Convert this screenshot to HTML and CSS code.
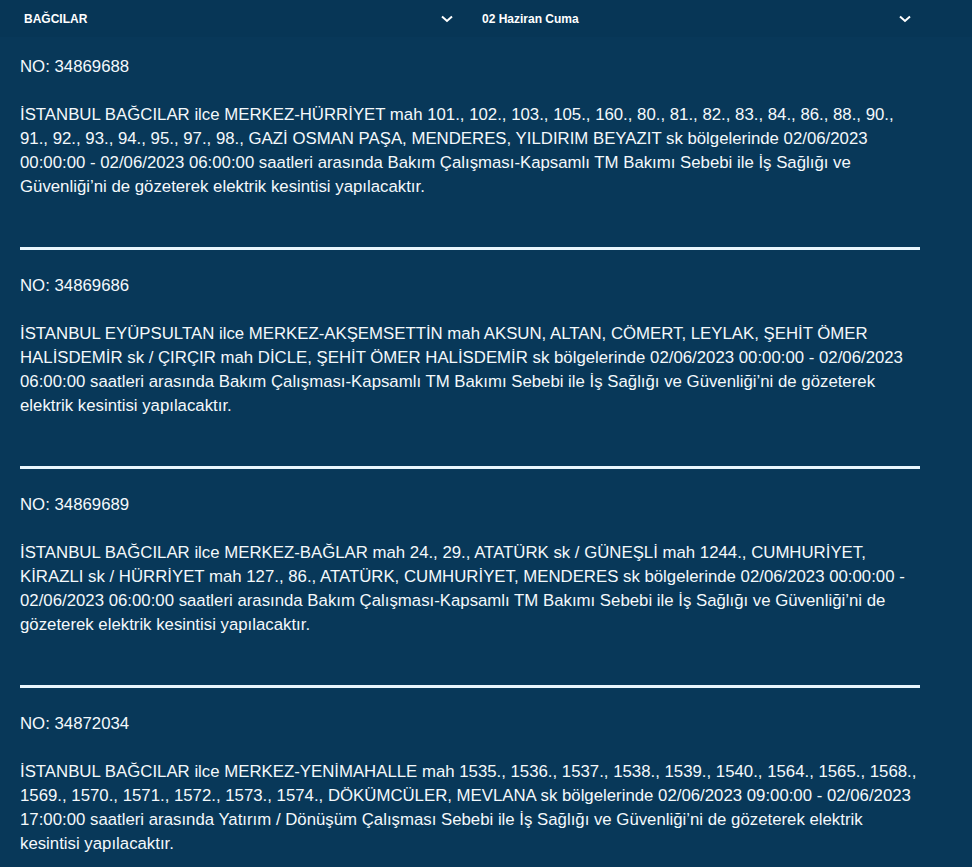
FILE: index.html
```html
<!DOCTYPE html>
<html lang="tr">
<head>
  <meta charset="UTF-8">
  <meta name="viewport" content="width=device-width, initial-scale=1.0">
  <title>Planlı Kesintiler</title>
  <link rel="stylesheet" href="styles.css">
</head>
<body>
  <!-- Filters -->
  <div class="filters">
    <div class="select">
      <span>BAĞCILAR</span>
      <svg class="chevron" width="12" height="8" viewBox="0 0 12 8"><polyline points="1,1.5 6,6 11,1.5" /></svg>
    </div>
    <div class="select">
      <span>02 Haziran Cuma</span>
      <svg class="chevron" width="12" height="8" viewBox="0 0 12 8"><polyline points="1,1.5 6,6 11,1.5" /></svg>
    </div>
  </div>

  <!-- Outage List -->
  <div class="outages">
    <div class="outage">
      <p class="no">NO: 34869688</p>
      <p class="desc">İSTANBUL BAĞCILAR ilce MERKEZ-HÜRRİYET mah 101., 102., 103., 105., 160., 80., 81., 82., 83., 84., 86., 88., 90., 91., 92., 93., 94., 95., 97., 98., GAZİ OSMAN PAŞA, MENDERES, YILDIRIM BEYAZIT sk bölgelerinde 02/06/2023 00:00:00 - 02/06/2023 06:00:00 saatleri arasında Bakım Çalışması-Kapsamlı TM Bakımı Sebebi ile İş Sağlığı ve Güvenliği’ni de gözeterek elektrik kesintisi yapılacaktır.</p>
    </div>
    <hr>
    <div class="outage">
      <p class="no">NO: 34869686</p>
      <p class="desc">İSTANBUL EYÜPSULTAN ilce MERKEZ-AKŞEMSETTİN mah AKSUN, ALTAN, CÖMERT, LEYLAK, ŞEHİT ÖMER HALİSDEMİR sk / ÇIRÇIR mah DİCLE, ŞEHİT ÖMER HALİSDEMİR sk bölgelerinde 02/06/2023 00:00:00 - 02/06/2023 06:00:00 saatleri arasında Bakım Çalışması-Kapsamlı TM Bakımı Sebebi ile İş Sağlığı ve Güvenliği’ni de gözeterek elektrik kesintisi yapılacaktır.</p>
    </div>
    <hr>
    <div class="outage">
      <p class="no">NO: 34869689</p>
      <p class="desc">İSTANBUL BAĞCILAR ilce MERKEZ-BAĞLAR mah 24., 29., ATATÜRK sk / GÜNEŞLİ mah 1244., CUMHURİYET, KİRAZLI sk / HÜRRİYET mah 127., 86., ATATÜRK, CUMHURİYET, MENDERES sk bölgelerinde 02/06/2023 00:00:00 - 02/06/2023 06:00:00 saatleri arasında Bakım Çalışması-Kapsamlı TM Bakımı Sebebi ile İş Sağlığı ve Güvenliği’ni de gözeterek elektrik kesintisi yapılacaktır.</p>
    </div>
    <hr>
    <div class="outage">
      <p class="no">NO: 34872034</p>
      <p class="desc">İSTANBUL BAĞCILAR ilce MERKEZ-YENİMAHALLE mah 1535., 1536., 1537., 1538., 1539., 1540., 1564., 1565., 1568., 1569., 1570., 1571., 1572., 1573., 1574., DÖKÜMCÜLER, MEVLANA sk bölgelerinde 02/06/2023 09:00:00 - 02/06/2023 17:00:00 saatleri arasında Yatırım / Dönüşüm Çalışması Sebebi ile İş Sağlığı ve Güvenliği’ni de gözeterek elektrik kesintisi yapılacaktır.</p>
    </div>
  </div>
</body>
</html>
```

FILE: styles.css
```css
/* Reset */
* {
  margin: 0;
  padding: 0;
  box-sizing: border-box;
}

body {
  background: #083859;
  color: #fff;
  font-family: 'Liberation Sans', Arial, sans-serif;
}

/* Filters */
.filters {
  display: flex;
  gap: 20px;
  height: 37px;
  padding-left: 24px;
  background: #073656;
}

.select {
  width: 438px;
  display: flex;
  align-items: center;
  justify-content: space-between;
  padding-right: 9px;
  font-size: 12px;
  font-weight: bold;
}

.chevron {
  fill: none;
  stroke: #fff;
  stroke-width: 2;
}

/* Outage List */
.outages {
  width: 940px;
  padding: 18px 20px;
}

.outage p {
  font-size: 16.8px;
  line-height: 24px;
  color: #f4f9fc;
}

.outage .desc {
  margin-top: 24px;
}

.outages hr {
  border: none;
  height: 3px;
  background: #e9f5fc;
  margin: 48px 0 24px;
}
```
